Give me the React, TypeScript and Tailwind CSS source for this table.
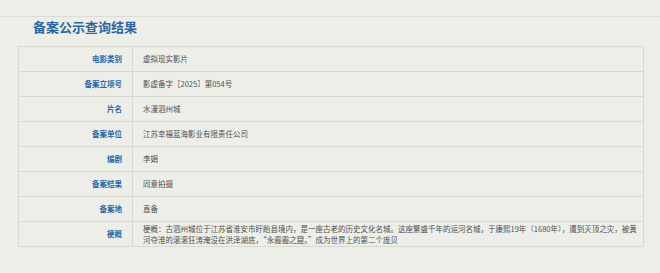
import React from "react";

const rows: [string, string][] = [
  ["电影类别", "虚拟现实影片"],
  ["备案立项号", "影虚备字［2025］第054号"],
  ["片名", "水漫泗州城"],
  ["备案单位", "江苏幸福蓝海影业有限责任公司"],
  ["编剧", "李娟"],
  ["备案结果", "同意拍摄"],
  ["备案地", "直备"],
];

export default function App() {
  return (
    <div
      className="w-[660px] h-[273px] bg-[#edeee8] overflow-hidden"
      style={{ fontFamily: '"Noto Sans CJK SC", "Noto Sans", sans-serif' }}
    >
      <div className="h-[17px] border-b border-[#dcddd6]" />
      <div className="pl-[33px] pt-[1px] h-[29px] text-[13px] leading-[18px] font-bold text-[#2a67a6]">
        备案公示查询结果
      </div>
      <div className="ml-[18px] w-[626px] border border-[#d8d9d3]">
        {rows.map(([k, v]) => (
          <div key={k} className="flex h-[25px] border-b border-[#d8d9d3]">
            <div className="w-[114px] shrink-0 border-r border-[#d8d9d3] flex items-center justify-end pr-[10px] text-[7.5px] font-bold text-[#2868aa]">
              {k}
            </div>
            <div className="flex-1 flex items-center pl-[10px] text-[7.5px] text-[#505050]">
              {v}
            </div>
          </div>
        ))}
        <div className="flex h-[24px]">
          <div className="w-[114px] shrink-0 border-r border-[#d8d9d3] flex items-center justify-end pr-[10px] text-[7.5px] font-bold text-[#2868aa]">
            梗概
          </div>
          <div className="flex-1 flex items-center pl-[10px] pr-[2px] text-[7.5px] leading-[11px] text-[#505050]">
            梗概：古泗州城位于江苏省淮安市盱眙县境内，是一座古老的历史文化名城。这座繁盛千年的运河名城，于康熙19年（1680年），遭到灭顶之灾，被黄河夺淮的滚滚狂涛淹没在洪泽湖底，“永霾霾之窟。”成为世界上的第二个庞贝
          </div>
        </div>
      </div>
    </div>
  );
}
